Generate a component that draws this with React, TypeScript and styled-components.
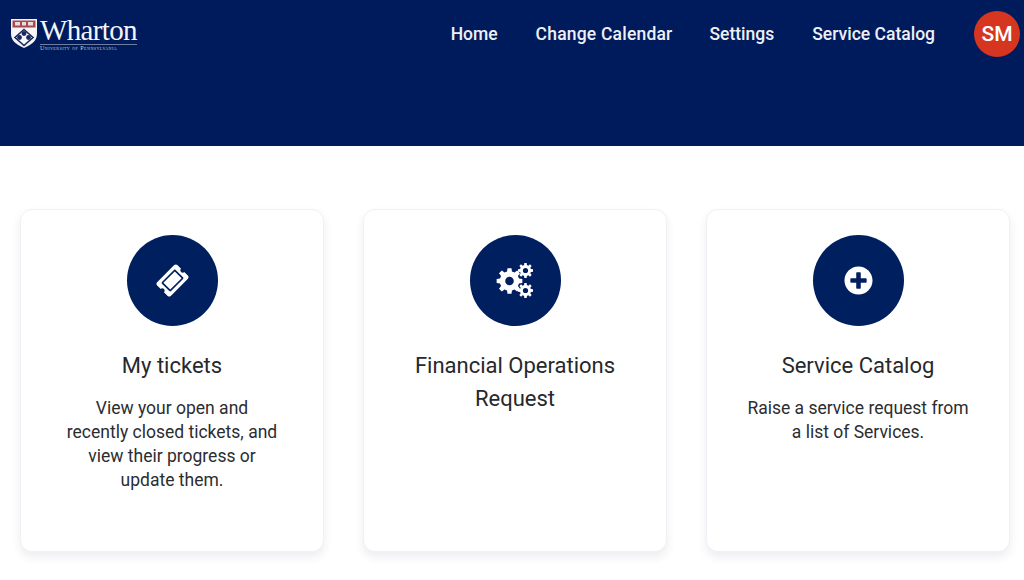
import React from "react";
import styled, { createGlobalStyle } from "styled-components";
import { FaPlusCircle, FaTicketAlt } from "react-icons/fa";

const Global = createGlobalStyle`
  html, body { margin: 0; padding: 0; background: #fff; }
  body { font-family: Roboto, "Liberation Sans", sans-serif; overflow: hidden; }
`;

const Page = styled.div`
  width: 1024px;
  height: 580px;
  overflow: hidden;
  background: #fff;
`;

const Header = styled.header`
  height: 146px;
  background: #001b5c;
  display: flex;
  align-items: flex-start;
  justify-content: space-between;
  padding: 11px 4px 0 10px;
  box-sizing: border-box;
`;

const Logo = styled.div`
  display: flex;
  align-items: flex-start;
  gap: 2px;
  margin-top: 7px;
  color: #fff;
`;

const LogoText = styled.div`
  display: flex;
  flex-direction: column;
  font-family: "Liberation Serif", serif;
`;

const LogoName = styled.span`
  font-size: 29px;
  line-height: 25px;
  letter-spacing: -0.65px;
  color: #f4f5f8;
`;

const LogoSub = styled.span`
  font-size: 6px;
  line-height: 7px;
  letter-spacing: 0.48px;
  white-space: nowrap;
  color: #c9cfdd;
  border-top: 1px solid #6f7c9e;
  margin-top: 1px;
  font-variant: small-caps;
`;

const Nav = styled.nav`
  display: flex;
  align-items: center;
  height: 46px;
`;

const NavLink = styled.a<{ $gap: number; $spacing?: number }>`
  font-size: 17.5px;
  font-weight: 500;
  color: #eef0f5;
  margin-right: ${(p) => p.$gap}px;
  letter-spacing: ${(p) => p.$spacing ?? 0}px;
  white-space: nowrap;
`;

const Avatar = styled.div`
  width: 46px;
  height: 46px;
  border-radius: 50%;
  background: #d6361f;
  color: #fff;
  font-size: 21px;
  font-weight: 500;
  display: flex;
  align-items: center;
  justify-content: center;
`;

const Cards = styled.main`
  display: flex;
  gap: 39px;
  padding: 63px 0 0 20px;
`;

const Card = styled.section`
  width: 304px;
  height: 343px;
  box-sizing: border-box;
  border: 1px solid #f0f1f4;
  border-radius: 12px;
  background: #fff;
  box-shadow: 0 5px 10px rgba(40, 50, 90, 0.09);
  padding: 25px 20px 0;
  display: flex;
  flex-direction: column;
  align-items: center;
  text-align: center;
`;

const IconCircle = styled.div`
  width: 91px;
  height: 91px;
  flex: none;
  border-radius: 50%;
  background: #001f5f;
  color: #fff;
  display: flex;
  align-items: center;
  justify-content: center;
`;

const Title = styled.h2`
  margin: 23px 0 0;
  font-size: 22px;
  font-weight: 400;
  line-height: 33px;
  color: #26282c;
`;

const Text = styled.p`
  margin: 14px 0 0;
  font-size: 17.5px;
  line-height: 24px;
  color: #2b2d31;
`;

const TicketIcon = styled(FaTicketAlt)`
  font-size: 29px;
  transform: rotate(-45deg);
`;

function gearPath(cx: number, cy: number, outer: number, inner: number, hole: number, teeth: number) {
  const pts: string[] = [];
  const step = (Math.PI * 2) / teeth;
  for (let i = 0; i < teeth; i++) {
    const a = i * step;
    const w = step * 0.2;
    const corners: [number, number][] = [
      [inner, a - step * 0.32],
      [outer, a - w],
      [outer, a + w],
      [inner, a + step * 0.32],
    ];
    corners.forEach(([r, t]) => pts.push(`${(cx + r * Math.cos(t)).toFixed(2)} ${(cy + r * Math.sin(t)).toFixed(2)}`));
  }
  const ring = `M${cx - hole} ${cy}a${hole} ${hole} 0 1 0 ${hole * 2} 0a${hole} ${hole} 0 1 0 ${-hole * 2} 0z`;
  return `M${pts.join("L")}z${ring}`;
}

function Cogs() {
  return (
    <svg width="38" height="36" viewBox="0 0 38 36" aria-hidden="true">
      <path fill="currentColor" fillRule="evenodd" d={gearPath(13.5, 18, 13, 9.8, 4.3, 8)} />
      <path fill="currentColor" fillRule="evenodd" d={gearPath(29.5, 7.5, 7.6, 5.6, 2.6, 8)} />
      <path fill="currentColor" fillRule="evenodd" d={gearPath(29.5, 27.5, 7.6, 5.6, 2.6, 8)} />
    </svg>
  );
}

function Shield() {
  return (
    <svg width="28" height="31" viewBox="0 0 28 31" aria-hidden="true">
      <path d="M1 1h26v15c0 7-6 11-13 14C7 27 1 23 1 16z" fill="#f2f3f6" />
      <rect x="2.5" y="2.5" width="23" height="7" fill="#a8494f" />
      <path d="M5 4h5v3.5H5zM12 4h4v3.5h-4zM18 4h5v3.5h-5z" fill="#e8dcdc" />
      <path d="M3 11h22v4c0 6-5 10-11 13C8 25 3 21 3 15z" fill="#f7f7f9" />
      <path d="M14 11.5l9 8-9 8-9-8z" fill="none" stroke="#1b2a5c" strokeWidth="1.6" />
      <circle cx="14" cy="15.5" r="2.4" fill="#1b2a5c" />
      <circle cx="9.5" cy="19.5" r="2.4" fill="#1b2a5c" />
      <circle cx="18.5" cy="19.5" r="2.4" fill="#1b2a5c" />
    </svg>
  );
}

export default function App() {
  return (
    <Page>
      <Global />
      <Header>
        <Logo>
          <Shield />
          <LogoText>
            <LogoName>Wharton</LogoName>
            <LogoSub>University of Pennsylvania</LogoSub>
          </LogoText>
        </Logo>
        <Nav>
          <NavLink $gap={38}>Home</NavLink>
          <NavLink $gap={37} $spacing={0.2}>Change Calendar</NavLink>
          <NavLink $gap={38}>Settings</NavLink>
          <NavLink $gap={39}>Service Catalog</NavLink>
          <Avatar>SM</Avatar>
        </Nav>
      </Header>
      <Cards>
        <Card>
          <IconCircle><TicketIcon /></IconCircle>
          <Title>My tickets</Title>
          <Text>View your open and<br />recently closed tickets, and<br />view their progress or<br />update them.</Text>
        </Card>
        <Card>
          <IconCircle><Cogs /></IconCircle>
          <Title>Financial Operations<br />Request</Title>
        </Card>
        <Card>
          <IconCircle><FaPlusCircle size={29} /></IconCircle>
          <Title>Service Catalog</Title>
          <Text>Raise a service request from<br />a list of Services.</Text>
        </Card>
      </Cards>
    </Page>
  );
}
